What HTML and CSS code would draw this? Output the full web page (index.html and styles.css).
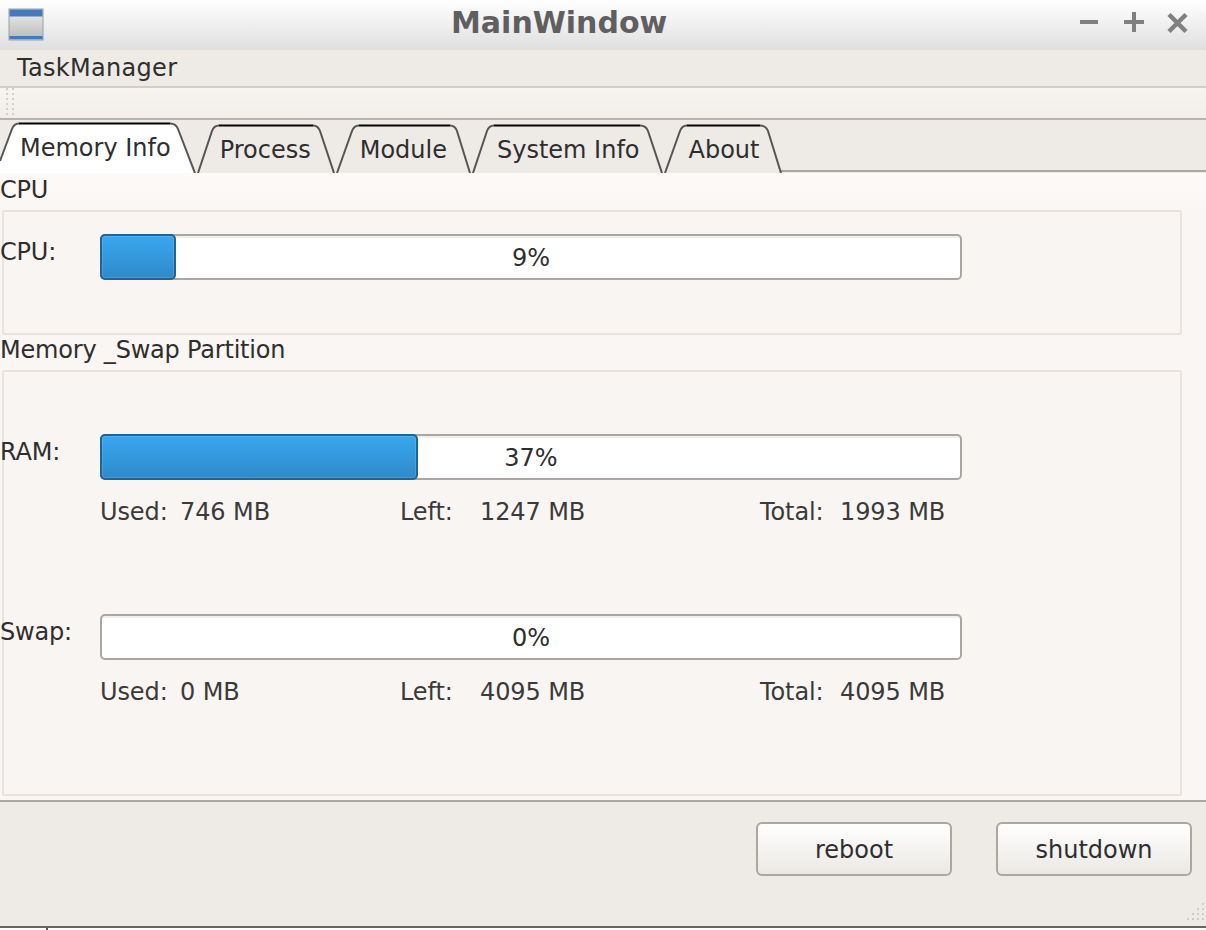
FILE: index.html
```html
<!DOCTYPE html>
<html lang="en">
<head>
<meta charset="utf-8">
<title>MainWindow</title>
<link rel="stylesheet" href="styles.css">
</head>
<body>
<div class="window">
  <header class="titlebar">
    <svg class="app-icon" width="36" height="34" viewBox="0 0 36 34" aria-hidden="true">
      <defs>
        <linearGradient id="appbody" x1="0" y1="0" x2="0" y2="1"><stop offset="0" stop-color="#eeeeee"/><stop offset="1" stop-color="#b9b9b9"/></linearGradient>
      </defs>
      <rect x="0.5" y="0.5" width="35" height="32" fill="#9a9da3"/>
      <rect x="1.5" y="1.5" width="33" height="30" fill="url(#appbody)"/>
      <rect x="1.5" y="1.5" width="33" height="7" fill="#4379bd"/>
      <rect x="1.5" y="28" width="33" height="3" fill="#4379bd"/>
    </svg>
    <h1 class="title">MainWindow</h1>
    <div class="win-controls">
      <svg width="110" height="24" viewBox="0 0 110 24" aria-hidden="true">
        <path d="M0 12H18" class="win-stroke"/>
        <path d="M44 12H64M54 2V22" class="win-stroke"/>
        <path d="M89 4.500L106 21.500M106 4.500L89 21.500" class="win-stroke win-x"/>
      </svg>
    </div>
  </header>

  <nav class="menubar"><span class="menu-item">TaskManager</span></nav>
  <div class="toolbar"><span class="grip"></span></div>

  <div class="tabstrip">
    <svg class="tabshape" width="1206" height="53" viewBox="0 120 1206 53" aria-hidden="true">
      <path d="M780 171H1206" class="tab-base"/>
      <path d="M0 173V160L12 129Q14 123.500 19 123.500H170Q176 123.500 178 129L193 173Z" class="tab-fill"/>
      <path d="M0 161L12 129Q14 123.500 19 123.500" class="tab-side"/>
      <path d="M170 123.500Q176 123.500 178 129L195 173" class="tab-side"/>
      <path d="M19 123.500H170" class="tab-top"/>
      <path d="M198 173L212 131Q214 125.500 219 125.500M313 125.500Q318 125.500 320 131L334 173" class="tab-side"/>
      <path d="M219 125.500H313" class="tab-top"/>
      <path d="M337 173L352 131Q354 125.500 359 125.500M450 125.500Q455 125.500 457 131L470 173" class="tab-side"/>
      <path d="M359 125.500H450" class="tab-top"/>
      <path d="M473 173L487 131Q489 125.500 494 125.500M640 125.500Q646 125.500 648 131L662 173" class="tab-side"/>
      <path d="M494 125.500H640" class="tab-top"/>
      <path d="M665 173L680 131Q682 125.500 687 125.500M760 125.500Q766 125.500 768 131L781 173" class="tab-side"/>
      <path d="M687 125.500H760" class="tab-top"/>
    </svg>
    <span class="tab tab-active">Memory Info</span>
    <span class="tab">Process</span>
    <span class="tab">Module</span>
    <span class="tab tab-wide">System Info</span>
    <span class="tab">About</span>
  </div>

  <main class="content">
    <div class="group-title">CPU</div>
    <section class="group group-cpu">
      <div class="meter-row">
        <span class="meter-label">CPU:</span>
        <div class="bar"><div class="chunk" style="width:76px"></div><span class="bar-text">9%</span></div>
      </div>
    </section>

    <div class="group-title group-title-mem">Memory _Swap Partition</div>
    <section class="group group-mem">
      <div class="meter-row">
        <span class="meter-label">RAM:</span>
        <div class="bar"><div class="chunk" style="width:318px"></div><span class="bar-text">37%</span></div>
      </div>
      <div class="stats">
        <span>Used:</span><span>746 MB</span>
        <span>Left:</span><span>1247 MB</span>
        <span>Total:</span><span>1993 MB</span>
      </div>
      <div class="meter-row meter-row-swap">
        <span class="meter-label">Swap:</span>
        <div class="bar"><span class="bar-text">0%</span></div>
      </div>
      <div class="stats">
        <span>Used:</span><span>0 MB</span>
        <span>Left:</span><span>4095 MB</span>
        <span>Total:</span><span>4095 MB</span>
      </div>
    </section>
  </main>

  <footer class="footer">
    <button class="btn" type="button">reboot</button>
    <button class="btn" type="button">shutdown</button>
    <svg class="size-grip" width="20" height="22" viewBox="0 0 20 22" aria-hidden="true">
      <g fill="#cfcbc6">
        <rect x="16" y="1" width="2" height="2"/>
        <rect x="16" y="6" width="2" height="2"/><rect x="11" y="6" width="2" height="2"/>
        <rect x="16" y="11" width="2" height="2"/><rect x="11" y="11" width="2" height="2"/><rect x="6" y="11" width="2" height="2"/>
        <rect x="16" y="16" width="2" height="2"/><rect x="11" y="16" width="2" height="2"/><rect x="6" y="16" width="2" height="2"/><rect x="1" y="16" width="2" height="2"/>
      </g>
    </svg>
  </footer>
  <div class="bottom-edge"><span class="edge-tick"></span></div>
</div>
</body>
</html>
```
FILE: styles.css
```css
* { box-sizing: border-box; }
html, body { margin: 0; padding: 0; background: #fff; }
body { width: 1206px; height: 930px; overflow: hidden; font-family: "DejaVu Sans", sans-serif; font-size: 24px; color: #2e2e2e; }
.window { display: flex; flex-direction: column; width: 1206px; height: 930px; }

.titlebar { display: flex; align-items: flex-start; height: 50px; flex: none; background: linear-gradient(#ffffff, #dfdfdf); }
.app-icon { flex: none; margin: 8px 0 0 8px; }
.title { margin: 3px 0 0 407px; font-size: 30px; line-height: 40px; font-weight: 700; color: #5f5f5f; letter-spacing: 0; }
.win-controls { margin: 10px 0 0 auto; padding-right: 16px; height: 24px; }
.win-controls svg { display: block; }
.win-stroke { stroke: #808080; stroke-width: 4; fill: none; }
.win-x { stroke-width: 4.500; }

.menubar { height: 36px; flex: none; background: #eeebe7; padding: 0 0 0 17px; line-height: 37px; letter-spacing: 0.3px; }
.menu-item { display: block; }
.toolbar { height: 34px; flex: none; background: linear-gradient(#f7f4ef 0, #f2efea 100%); border-top: 2px solid #d1cec9; border-bottom: 2px solid #b8b3ad; padding-left: 6px; }
.grip { display: block; width: 9px; height: 30px; background-image: radial-gradient(circle at 1px 1px, #d2cfca 1px, transparent 1.200px); background-size: 6px 5px; }

.tabstrip { position: relative; display: flex; gap: 49px; height: 53px; flex: none; background: #eeebe7; padding-left: 20px; }
.tabshape { position: absolute; left: 0; top: 0; display: block; }
.tab { position: relative; line-height: 60px; white-space: nowrap; }
.tab-active { line-height: 56px; }
.tab-wide { margin-left: 1px; }
.tab-fill { fill: #fff; stroke: none; }
.tab-side { fill: none; stroke: #555; stroke-width: 2; }
.tab-top { fill: none; stroke: #000; stroke-width: 2; }
.tab-base { stroke: #aaa6a0; stroke-width: 2; fill: none; }

.content { flex: none; height: 627px; background: linear-gradient(#fdfaf7, #faf6f3 40px); padding: 0 24px 0 0; display: flex; flex-direction: column; }
.group-title { height: 37px; line-height: 35px; flex: none; letter-spacing: -0.2px; }
.group-title-mem { height: 35px; line-height: 31px; }
.group { flex: none; margin-left: 2px; border: 2px solid #e8e3de; border-radius: 2px; background: #f9f5f2; }
.group-cpu { height: 125px; padding-top: 22px; }
.group-mem { height: 426px; padding-top: 62px; }

.meter-row { display: flex; align-items: flex-start; margin-left: -4px; height: 46px; }
.meter-row-swap { margin-top: 82px; }
.meter-label { width: 100px; line-height: 36px; flex: none; letter-spacing: -0.2px; }
.bar { position: relative; width: 862px; height: 46px; background: #fff; border: 2px solid #aaa6a0; border-radius: 5px; box-shadow: inset 0 2px 0 #f1f0ef; }
.chunk { position: absolute; left: -2px; top: -2px; height: 46px; background: linear-gradient(#39a7f0, #2f8ac9); border: 2px solid #1f6496; border-radius: 5px; box-shadow: inset 0 0 0 1px rgba(255, 255, 255, 0.12); }
.bar-text { position: absolute; inset: 0; text-align: center; line-height: 44px; }

.stats { display: grid; grid-template-columns: 80px 220px 80px 280px 80px 1fr; margin: 10px 0 0 96px; height: 42px; line-height: 44px; color: #3a3a3a; letter-spacing: -0.1px; }

.footer { position: relative; display: flex; justify-content: flex-end; align-items: flex-start; gap: 44px; flex: none; height: 126px; background: #eeebe7; border-top: 2px solid #aaa6a0; padding: 20px 14px 0 0; }
.btn { width: 196px; height: 54px; font: inherit; color: #2e2e2e; background: linear-gradient(#ffffff, #ebe8e4); border: 2px solid #aaa6a0; border-radius: 6px; padding: 2px 0 0; }
.size-grip { position: absolute; right: 0; bottom: 2px; display: block; }

.bottom-edge { position: relative; flex: none; height: 4px; background: #fff; border-top: 2px solid #666; }
.edge-tick { position: absolute; left: 46px; top: 0; width: 2px; height: 2px; background: #555; }
```
